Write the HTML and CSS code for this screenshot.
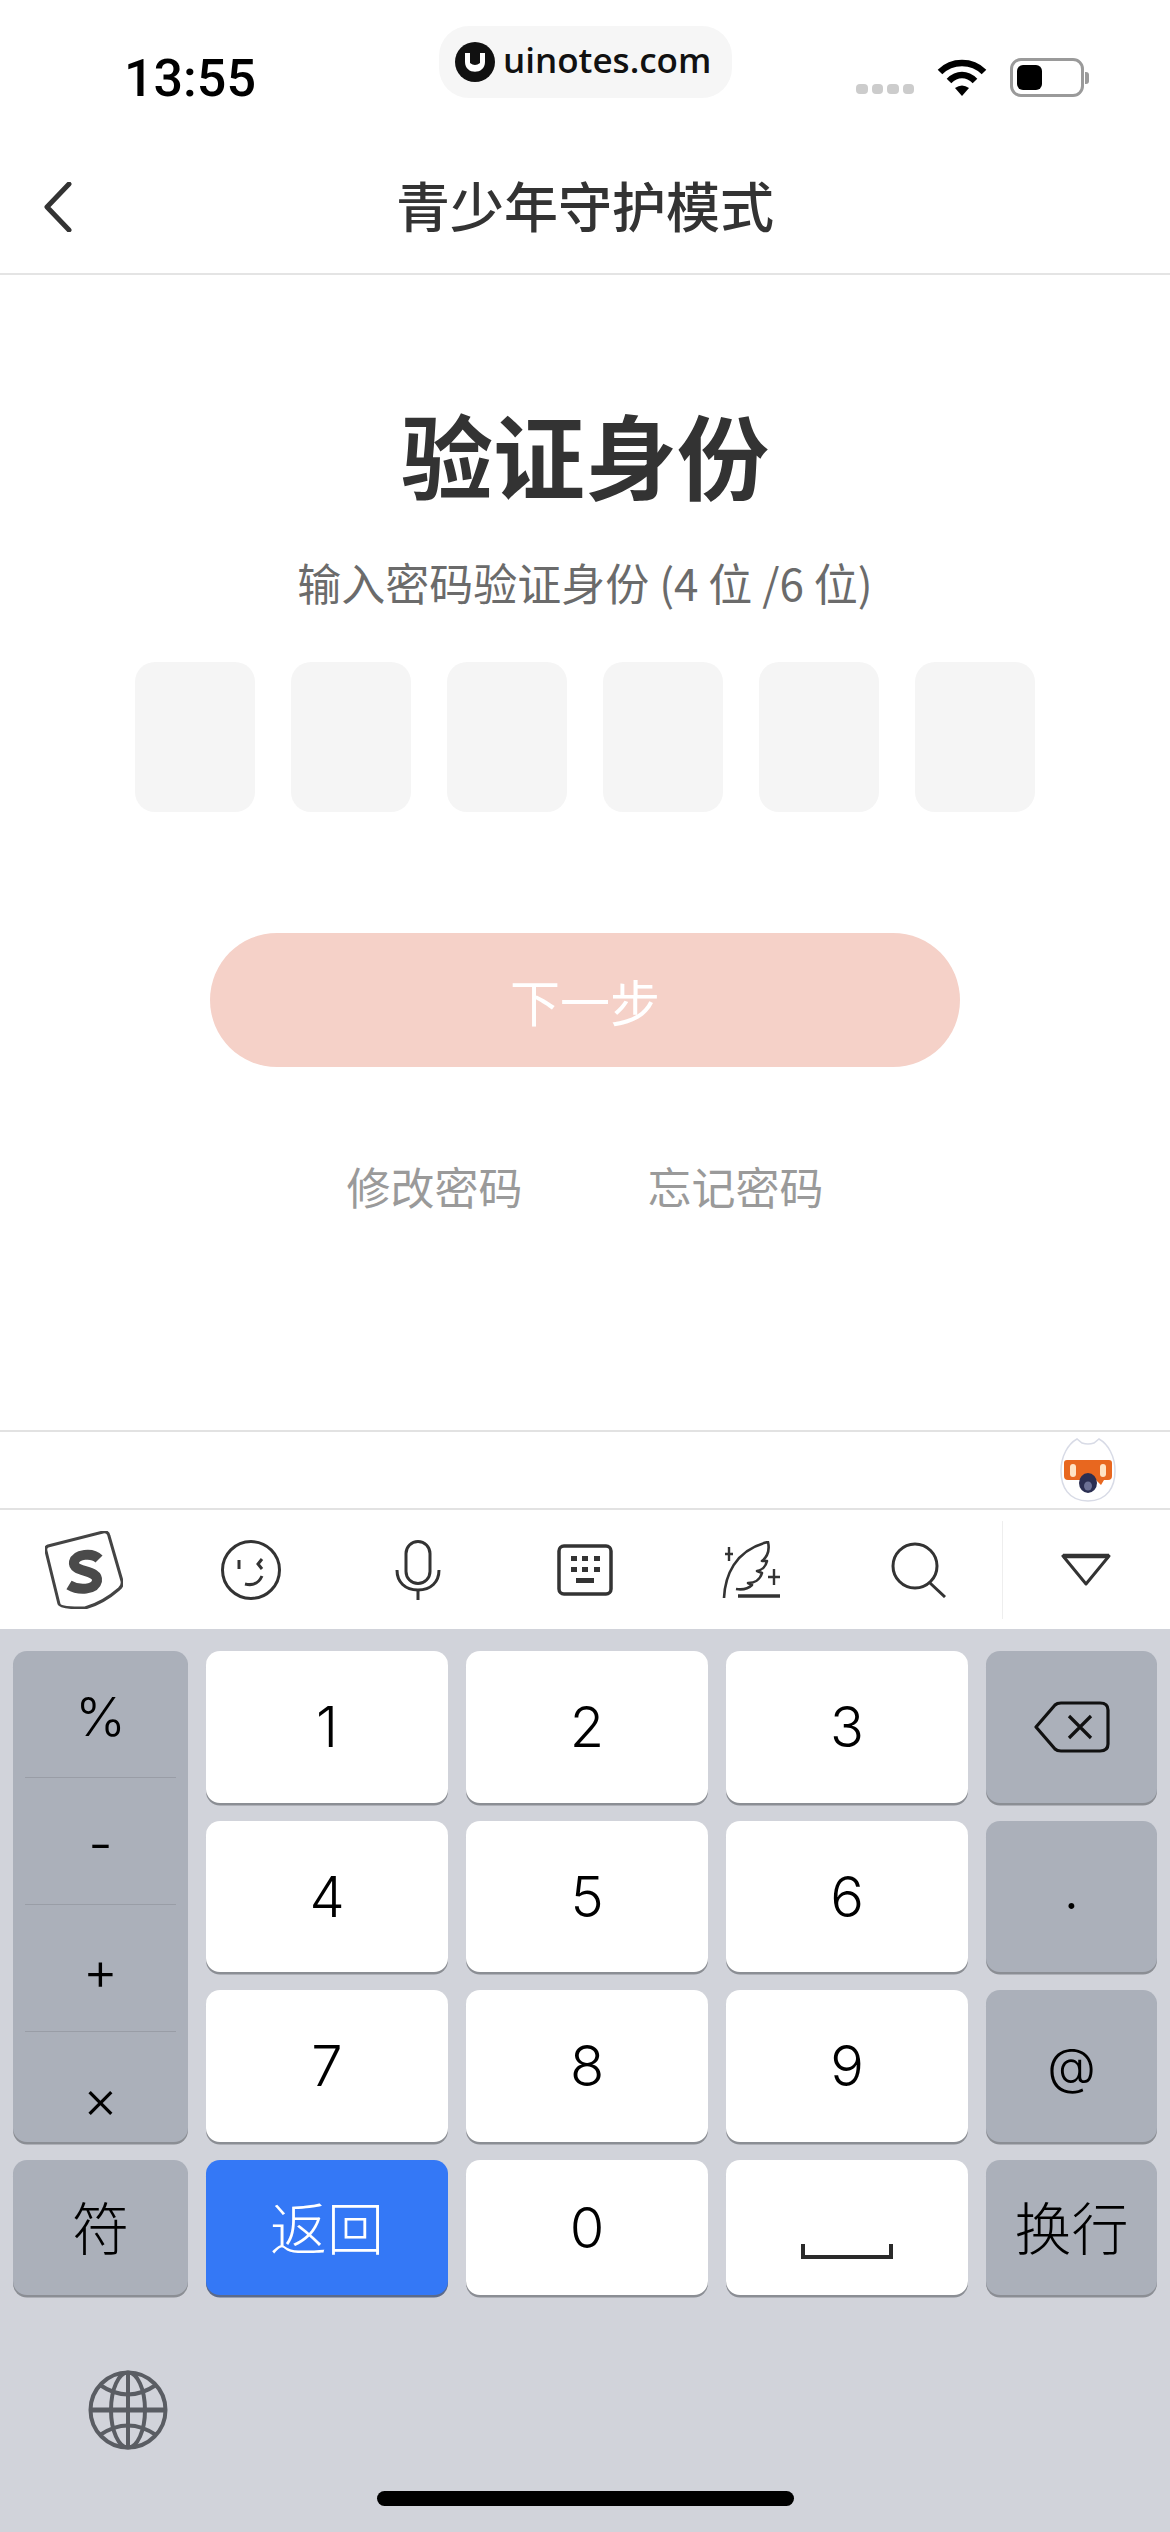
FILE: index.html
```html
<!DOCTYPE html>
<html lang="zh-CN">

<head>
    <meta charset="UTF-8">
    <meta name="viewport" content="width=device-width, initial-scale=1.0">
    <title>青少年守护模式</title>
    <link rel="stylesheet" href="styles.css">
</head>

<body>
    <!-- 状态栏 -->
    <div class="status-bar">
        <span class="time">13:55</span>
        <div class="status-icons">
            <div class="signal"><i></i><i></i><i></i><i></i></div>
            <svg class="wifi" width="50" height="38" viewBox="0 0 50 38">
                <path d="M3 14C15 2 35 2 47 14" fill="none" stroke="#000" stroke-width="6.5" />
                <path d="M12 23C20 15 30 15 38 23" fill="none" stroke="#000" stroke-width="6.5" />
                <path d="M18 30Q25 25 32 30L25 38Z" fill="#000" />
            </svg>
            <div class="battery"><i></i></div>
            <div class="battery-nub"></div>
        </div>
    </div>

    <!-- 水印 -->
    <div class="watermark">
        <svg width="40" height="40" viewBox="0 0 40 40">
            <circle cx="20" cy="20" r="20" fill="#111" />
            <path d="M10 11V20C10 33 30 33 30 20V11L25 11V21Q20 25 15 21V11Z" fill="#fff" />
        </svg>
        <span>uinotes.com</span>
    </div>

    <!-- 标题栏 -->
    <div class="nav-bar">
        <svg class="back" width="30" height="50" viewBox="0 0 30 50">
            <path d="M26 2L4 25L26 48" fill="none" stroke="#333" stroke-width="5" stroke-linecap="round" stroke-linejoin="round" />
        </svg>
        <span class="nav-title">青少年守护模式</span>
    </div>

    <!-- 验证内容 -->
    <div class="content">
        <h1 class="heading">验证身份</h1>
        <p class="subtitle">输入密码验证身份 (4 位 /6 位)</p>
        <div class="code-boxes">
            <div class="code-box"></div>
            <div class="code-box"></div>
            <div class="code-box"></div>
            <div class="code-box"></div>
            <div class="code-box"></div>
            <div class="code-box"></div>
        </div>
        <div class="next-btn">下一步</div>
        <div class="links">
            <span>修改密码</span>
            <span>忘记密码</span>
        </div>
    </div>

    <!-- 输入法候选条 -->
    <div class="candidate-bar">
        <svg width="56" height="64" viewBox="0 0 56 64">
            <path d="M28 63C8 63 1 48 1 33C1 18 8 6 17 1L22 5Q28 7 34 5L39 1C48 6 55 18 55 33C55 48 48 63 28 63Z" fill="#fff" stroke="#d8dbe6" stroke-width="1.5" />
            <path d="M4 25Q4 22 7 22H49Q52 22 52 25V38Q52 42 48 42H44L41 47L36 42H20L15 42H8Q4 42 4 38Z" fill="#e8671f" />
            <rect x="10" y="26" width="6" height="13" rx="3" fill="#ffe3c4" />
            <rect x="40" y="26" width="6" height="13" rx="3" fill="#ffe3c4" />
            <ellipse cx="28" cy="45" rx="9" ry="10" fill="#2b2f52" />
            <ellipse cx="28" cy="48" rx="4" ry="4.5" fill="#6c7195" />
        </svg>
    </div>

    <!-- 输入法工具栏 -->
    <div class="tool-bar">
        <div class="tool">
            <svg width="78" height="78" viewBox="0 0 78 78">
                <path d="M3 15L58 1Q63 0 64 5L77 50Q78 55 74 58Q58 72 40 77Q15 77 14 73L1 20Q0 16 3 15Z" fill="#fff" stroke="#444" stroke-width="3" stroke-linejoin="round" />
                <path d="M54 28C47 21 31 23 29 31C27 42 54 38 52 50C50 59 34 60 24 54" fill="none" stroke="#4a4a4a" stroke-width="10" />
            </svg>
        </div>
        <div class="tool">
            <svg width="60" height="60" viewBox="0 0 60 60" fill="none" stroke="#333" stroke-width="3">
                <circle cx="30" cy="30" r="28.5" />
                <path d="M18 20V29" />
                <path d="M41 19L37 24L41 29" />
                <path d="M24 44Q36 47 41 36" />
            </svg>
        </div>
        <div class="tool">
            <svg width="46" height="60" viewBox="0 0 46 60" fill="none" stroke="#333" stroke-width="3">
                <rect x="11" y="1.5" width="24" height="42" rx="12" />
                <path d="M2 30C2 42 10 50 23 50C36 50 44 42 44 30" />
                <path d="M23 50V60" />
            </svg>
        </div>
        <div class="tool">
            <svg width="56" height="52" viewBox="0 0 56 52">
                <rect x="2" y="2" width="52" height="48" rx="5" fill="none" stroke="#333" stroke-width="3.5" />
                <g fill="#333">
                    <rect x="14" y="12" width="6" height="5" />
                    <rect x="25" y="12" width="6" height="5" />
                    <rect x="37" y="12" width="6" height="5" />
                    <rect x="14" y="23" width="6" height="5" />
                    <rect x="25" y="23" width="6" height="5" />
                    <rect x="37" y="23" width="6" height="5" />
                    <rect x="19" y="34" width="18" height="5" />
                </g>
            </svg>
        </div>
        <div class="tool">
            <svg width="60" height="58" viewBox="0 0 60 58" fill="none" stroke="#333" stroke-width="2.6">
                <path d="M2 57C3 36 12 9 46 1C48 10 45 16 40 20L45 20C44 25 40 29 35 30L40 32C38 39 32 42 26 42L30 44C26 48 20 49 14 48" stroke-linejoin="round" />
                <path d="M7 6V20M3 13H11" stroke-width="2.4" />
                <path d="M52 28V44M46 36H58" stroke-width="2.4" />
                <path d="M16 55H58" stroke-width="3.6" />
            </svg>
        </div>
        <div class="tool">
            <svg width="56" height="56" viewBox="0 0 56 56" fill="none" stroke="#333" stroke-width="3">
                <circle cx="24" cy="24" r="22" />
                <path d="M39 41L54 55" />
            </svg>
        </div>
        <div class="tool tool-last">
            <svg width="54" height="33" viewBox="0 0 54 33">
                <path d="M4 3H50L27 31Z" fill="none" stroke="#333" stroke-width="3" stroke-linejoin="round" />
                <path d="M4 3H50" stroke="#333" stroke-width="4.5" />
            </svg>
        </div>
    </div>

    <!-- 数字键盘 -->
    <div class="keyboard">
        <div class="keys">
            <div class="symbols">
                <div class="symbol">%</div>
                <div class="symbol">-</div>
                <div class="symbol">+</div>
                <div class="symbol">×</div>
            </div>
            <div class="key">1</div>
            <div class="key">2</div>
            <div class="key">3</div>
            <div class="key key-gray">
                <svg width="76" height="52" viewBox="0 0 76 52" fill="none" stroke="#111" stroke-width="3.2">
                    <path d="M2 26L21 4Q23 2 27 2H66Q74 2 74 9V43Q74 50 66 50H27Q23 50 21 48Z" stroke-linejoin="round" />
                    <path d="M35 15L57 37M57 15L35 37" />
                </svg>
            </div>
            <div class="key">4</div>
            <div class="key">5</div>
            <div class="key">6</div>
            <div class="key key-gray key-dot">.</div>
            <div class="key">7</div>
            <div class="key">8</div>
            <div class="key">9</div>
            <div class="key key-gray key-at">@</div>
            <div class="key key-gray key-cjk">符</div>
            <div class="key key-blue key-cjk">返回</div>
            <div class="key">0</div>
            <div class="key">
                <svg class="space-icon" width="92" height="16" viewBox="0 0 92 16">
                    <path d="M2 0V13H90V0" fill="none" stroke="#2a2a2a" stroke-width="4" />
                </svg>
            </div>
            <div class="key key-gray key-cjk">换行</div>
        </div>

        <svg class="globe" width="80" height="80" viewBox="0 0 80 80" fill="none" stroke="#5a5d63" stroke-width="4">
            <circle cx="40" cy="40" r="37.5" />
            <ellipse cx="40" cy="40" rx="17" ry="37.5" />
            <path d="M40 3V77" />
            <path d="M2 40H78" stroke-width="5" />
            <path d="M12 15Q40 34 68 15" />
            <path d="M12 65Q40 46 68 65" />
        </svg>
        <div class="home-bar"></div>
    </div>
</body>

</html>
```

FILE: styles.css
```css
body {
    margin: 0;
    width: 1170px;
    height: 2532px;
    overflow: hidden;
    position: relative;
    display: flex;
    flex-direction: column;
    background-color: #fff;
    font-family: "Noto Sans CJK SC", "Noto Sans", sans-serif;
}

/* 状态栏 */
.status-bar {
    height: 124px;
    flex-shrink: 0;
    display: flex;
    justify-content: space-between;
    align-items: flex-start;
    padding: 0 81px 0 124px;
    box-sizing: border-box;
}

.time {
    font-family: Roboto, sans-serif;
    font-weight: 500;
    font-size: 52px;
    line-height: 52px;
    margin-top: 53px;
    color: #000;
}

.status-icons {
    display: flex;
    align-items: flex-end;
    margin-top: 58px;
}

.signal {
    display: flex;
    gap: 4px;
    margin-bottom: 3px;
    margin-right: 23px;
}

.signal i {
    width: 11.5px;
    height: 10px;
    border-radius: 4px;
    background-color: #ccc;
}

.wifi {
    margin-right: 23px;
    margin-bottom: 1px;
}

.battery {
    width: 74px;
    height: 39px;
    box-sizing: border-box;
    border: 3px solid #9a9a9a;
    border-radius: 11px;
    padding: 4px;
}

.battery i {
    display: block;
    width: 25px;
    height: 100%;
    background-color: #000;
    border-radius: 6px;
}

.battery-nub {
    width: 4px;
    height: 12px;
    margin: 0 0 13px 1px;
    background-color: #9a9a9a;
    border-radius: 0 3px 3px 0;
}

/* 水印 */
.watermark {
    position: absolute;
    top: 26px;
    left: 439px;
    width: 293px;
    height: 72px;
    box-sizing: border-box;
    padding-left: 16px;
    display: flex;
    align-items: center;
    gap: 8px;
    background-color: #f6f6f6;
    border-radius: 30px;
}

.watermark span {
    font-family: "Open Sans", sans-serif;
    font-weight: 600;
    font-size: 35px;
    line-height: 40px;
    margin-top: -4px;
    color: #111;
}

/* 标题栏 */
.nav-bar {
    flex-shrink: 0;
    position: relative;
    display: flex;
    justify-content: center;
    align-items: center;
    border-bottom: 2px solid #e4e4e4;
    height: 149px;
}

.back {
    position: absolute;
    left: 43px;
    top: 58px;
}

.nav-title {
    font-size: 54px;
    font-weight: 500;
    line-height: 70px;
    margin-top: 13px;
    color: #333;
}

/* 验证内容 */
.content {
    height: 1155px;
    flex-shrink: 0;
    box-sizing: border-box;
    padding-top: 128px;
    display: flex;
    flex-direction: column;
    align-items: center;
}

.heading {
    margin: 0;
    font-size: 92px;
    font-weight: 700;
    line-height: 100px;
    color: #333;
}

.subtitle {
    margin: 49px 0 0;
    font-size: 44px;
    line-height: 60px;
    color: #6b6b6b;
}

.code-boxes {
    margin-top: 50px;
    display: flex;
    gap: 36px;
}

.code-box {
    width: 120px;
    height: 150px;
    background-color: #f5f5f5;
    border-radius: 20px;
}

.next-btn {
    margin-top: 121px;
    width: 750px;
    height: 134px;
    border-radius: 67px;
    background-color: #f5d1c8;
    color: #fff;
    font-size: 50px;
    line-height: 134px;
    text-align: center;
}

.links {
    margin-top: 89px;
    display: flex;
    gap: 125px;
    font-size: 44px;
    line-height: 60px;
    color: #9a9a9a;
}

/* 输入法候选条 */
.candidate-bar {
    height: 80px;
    flex-shrink: 0;
    box-sizing: border-box;
    border-top: 2px solid #e2e2e2;
    border-bottom: 2px solid #e2e2e2;
    display: flex;
    justify-content: flex-end;
    align-items: center;
    padding-right: 54px;
}

/* 输入法工具栏 */
.tool-bar {
    height: 119px;
    flex-shrink: 0;
    display: grid;
    grid-template-columns: repeat(7, 167px);
    align-items: center;
}

.tool {
    display: flex;
    justify-content: center;
    align-items: center;
    height: 98px;
}

.tool-last {
    border-left: 1px solid #eee;
}

/* 数字键盘 */
.keyboard {
    flex: 1;
    display: flex;
    flex-direction: column;
    background-color: #d1d3da;
    padding: 22px 13px 0;
}

.keys {
    display: grid;
    grid-template-columns: 175px 242px 242px 242px 171px;
    grid-template-rows: 152px 151px 152px 135px;
    column-gap: 18px;
    row-gap: 18px;
}

.key {
    display: flex;
    justify-content: center;
    align-items: center;
    background-color: #fff;
    border-radius: 14px;
    box-shadow: 0 2.5px 0 #8b8e94;
    font-family: Inter, sans-serif;
    font-weight: 300;
    font-size: 56px;
    color: #000;
}

.key-gray {
    background-color: #abb0ba;
}

.key-blue {
    background-color: #3478f6;
    color: #fff;
    box-shadow: 0 2.5px 0 #5b6a8a;
}

.key-cjk {
    font-family: "Noto Sans CJK SC", sans-serif;
    font-weight: 300;
    font-size: 57px;
    padding-bottom: 6px;
    box-sizing: border-box;
}

.key-dot {
    padding-bottom: 16px;
    box-sizing: border-box;
}

.key-at {
    font-size: 50px;
}

.space-icon {
    margin-top: 48px;
}

.symbols {
    grid-row: span 3;
    display: flex;
    flex-direction: column;
    background-color: #abb0ba;
    border-radius: 14px;
    box-shadow: 0 2.5px 0 #8b8e94;
    padding: 0 12px;
}

.symbol {
    height: 127px;
    flex-shrink: 0;
    text-align: center;
    border-bottom: 1px solid #999da6;
    box-sizing: border-box;
    font-family: Inter, sans-serif;
    font-weight: 300;
    font-size: 54px;
    line-height: 132px;
    color: #000;
}

.symbol:last-child {
    height: 110px;
    border-bottom: none;
    line-height: 134px;
}

.globe {
    margin: 75px 0 0 75px;
}

.home-bar {
    margin-top: 41px;
    align-self: center;
    width: 417px;
    height: 15px;
    background-color: #000;
    border-radius: 8px;
}
```
